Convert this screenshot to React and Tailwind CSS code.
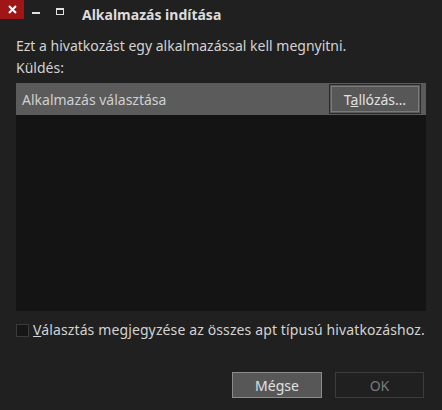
export default function App() {
  return (
    <div
      className="w-[442px] h-[410px] bg-[#202020] flex flex-col text-[14px] text-[#d3d3d3]"
      style={{ fontFamily: '"Noto Sans", "DejaVu Sans", sans-serif' }}
    >
      {/* title bar */}
      <div className="h-[30px] flex items-start shrink-0">
        <div className="w-[24px] h-[19px] bg-[#a01616] flex items-center justify-center">
          <svg width="9" height="9" viewBox="0 0 9 9">
            <path d="M1 1L8 8M8 1L1 8" stroke="#ffffff" strokeWidth="2" />
          </svg>
        </div>
        <div className="ml-[8px] mt-[12px] w-[8px] h-[2px] bg-[#e0e0e0]" />
        <div className="ml-[16px] mt-[8px] w-[8px] h-[7px] border border-[#e0e0e0] border-t-2" />
        <div className="ml-[18px] mt-[5px] font-bold text-[#dcdcdc] leading-[20px]">
          Alkalmazás indítása
        </div>
      </div>

      <div className="px-4 flex flex-col flex-1">
        <p className="mt-[6px] leading-[19px]">Ezt a hivatkozást egy alkalmazással kell megnyitni.</p>
        <p className="mt-[3px] leading-[19px]">Küldés:</p>

        {/* list */}
        <div className="mt-[6px] h-[228px] bg-[#141414] flex flex-col">
          <div className="h-[32px] bg-[#5b5b5b] flex items-center justify-between pl-[6px] pr-[5px]">
            <span className="text-[#d0d0d0]">Alkalmazás választása</span>
            <div className="w-[92px] h-[30px] border border-[#2a2a2a] p-px">
              <div className="w-full h-full border border-[#7a7a7a] bg-[#575757] flex items-center justify-center text-[#e0e0e0]">
                <span>
                  T<span className="underline">a</span>llózás…
                </span>
              </div>
            </div>
          </div>
        </div>

        {/* checkbox */}
        <div className="mt-[11px] flex items-center gap-[4px]">
          <div className="w-[13px] h-[13px] shrink-0 bg-[#161616] border border-[#3a3a3a]" />
          <span className="leading-[16px] tracking-[0.12px] whitespace-nowrap">
            <span className="underline">V</span>álasztás megjegyzése az összes apt típusú hivatkozáshoz.
          </span>
        </div>

        {/* buttons */}
        <div className="mt-[34px] flex justify-end gap-[13px] pr-[2px]">
          <button className="w-[90px] h-[26px] bg-[#575757] border border-[#8c8c8c] text-[#e0e0e0]">
            Mégse
          </button>
          <button className="w-[89px] h-[26px] border border-[#3c3c3c] text-[#7a7a7a]">OK</button>
        </div>
      </div>
    </div>
  );
}
